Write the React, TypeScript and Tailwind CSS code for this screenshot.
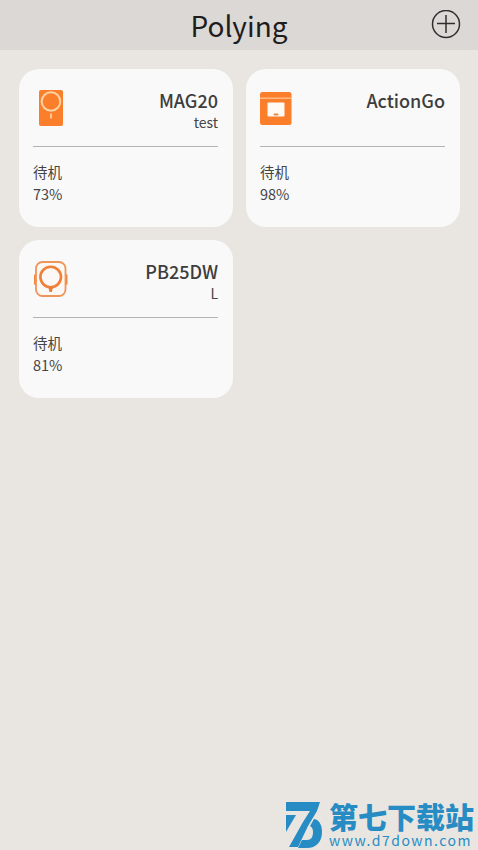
import React from "react";

const sans = "font-['Noto_Sans_CJK_SC','Noto_Sans',sans-serif]";

function MagIcon() {
  return (
    <svg className="block h-[38px] w-9" viewBox="0 0 36 38" fill="none">
      <rect x="6" y="1" width="24" height="36" rx="2" fill="#fb7f2b" />
      <circle cx="18" cy="12.5" r="9.3" stroke="#ffd3a4" strokeWidth="2" />
      <path d="M18 24.5v5" stroke="#ffd9b5" strokeWidth="1.6" />
    </svg>
  );
}

function ActionIcon() {
  return (
    <svg className="block h-[38px] w-9" viewBox="0 0 36 38" fill="none">
      <rect x="0" y="3" width="31.5" height="33" rx="2.5" fill="#fb7f2b" />
      <path d="M0 9.2h31.5" stroke="#ffc999" strokeWidth="1.2" />
      <rect x="7.5" y="13.5" width="17" height="14" rx="1" fill="#fffaf4" />
      <rect x="13.5" y="24.5" width="5" height="2" rx="1" fill="#e8894a" />
    </svg>
  );
}

function WatchIcon() {
  return (
    <svg className="block h-[38px] w-9" viewBox="0 0 36 38" fill="none">
      <rect x="1" y="14" width="3.5" height="11" rx="1.5" fill="#f0853c" />
      <rect x="31" y="14" width="3.5" height="11" rx="1.5" fill="#f0853c" />
      <rect x="3" y="2" width="29.5" height="34" rx="6.5" fill="#fbf8f5" stroke="#f0955a" strokeWidth="1.8" />
      <circle cx="17.7" cy="17" r="10.3" stroke="#ef8138" strokeWidth="2.6" />
      <path d="M15.5 27.5h4.4l-1 4.5h-2.4z" fill="#e8803b" />
    </svg>
  );
}

type Device = { name: string; note: string; charge: string; icon: React.ReactNode };

const devices: Device[] = [
  { name: "MAG20", note: "test", charge: "73%", icon: <MagIcon /> },
  { name: "ActionGo", note: "", charge: "98%", icon: <ActionIcon /> },
  { name: "PB25DW", note: "L", charge: "81%", icon: <WatchIcon /> },
];

function DeviceCard({ name, note, charge, icon }: Device) {
  return (
    <article className="h-[158px] rounded-[20px] bg-[#f9f9f9] px-[14.5px] pt-5 text-[#454545]">
      <div className="flex h-[58px] justify-between border-b-[1.5px] border-[#b5b4b2]">
        {icon}
        <div className="text-right">
          <h2 className="text-lg leading-[22px] font-medium text-[#3d3d3d]">{name}</h2>
          <p className="text-sm leading-[22px]">{note}</p>
        </div>
      </div>
      <div className="pt-[14px] text-[14.5px] leading-[21.5px]">
        <p>待机</p>
        <p>{charge}</p>
      </div>
    </article>
  );
}

function Watermark() {
  return (
    <div className="absolute right-[6px] bottom-0 flex h-[50px] text-[#278cc4]">
      <svg className="h-[50px] w-[43px]" viewBox="0 0 43 50" fill="currentColor">
        <path d="M0 2h34l-3 9-9 15-10 21H3l14-25 7-11H0z" />
        <path d="M28 19c6 1 8 7 8 13 0 10-6 16-15 16h-9l4-8h5c4 0 6-3 6-8 0-3-1-5-3-6z" />
        <path d="M0 15h10L0 32z" />
      </svg>
      <div className="w-[143px]">
        <p className="text-[29px] leading-[32px] font-black whitespace-nowrap">第七下载站</p>
        <p className="text-[14px] leading-[16px] tracking-[1.5px] whitespace-nowrap">www.d7down.com</p>
      </div>
    </div>
  );
}

export default function App() {
  return (
    <main className={`relative h-[850px] w-[478px] overflow-hidden bg-[#e9e6e1] ${sans}`}>
      <header className="grid h-[50px] grid-cols-[1fr_auto_1fr] items-center bg-[#dcd8d5] px-[17px]">
        <span />
        <h1 className="text-[28px] leading-[50px] text-[#1f1d1c]">Polying</h1>
        <button className="justify-self-end" aria-label="Add device">
          <svg className="block h-[30px] w-[30px]" viewBox="0 0 30 30" fill="none" stroke="#302e2d" strokeWidth="1.5">
            <circle cx="15" cy="13" r="13.5" transform="translate(0 1)" />
            <path d="M6 13.5h18M15 5v18" />
          </svg>
        </button>
      </header>
      <section className="grid grid-cols-2 gap-x-[13px] gap-y-[13px] px-[18.5px] pt-[19px]">
        {devices.map((device) => <DeviceCard key={device.name} {...device} />)}
      </section>
      <Watermark />
    </main>
  );
}
